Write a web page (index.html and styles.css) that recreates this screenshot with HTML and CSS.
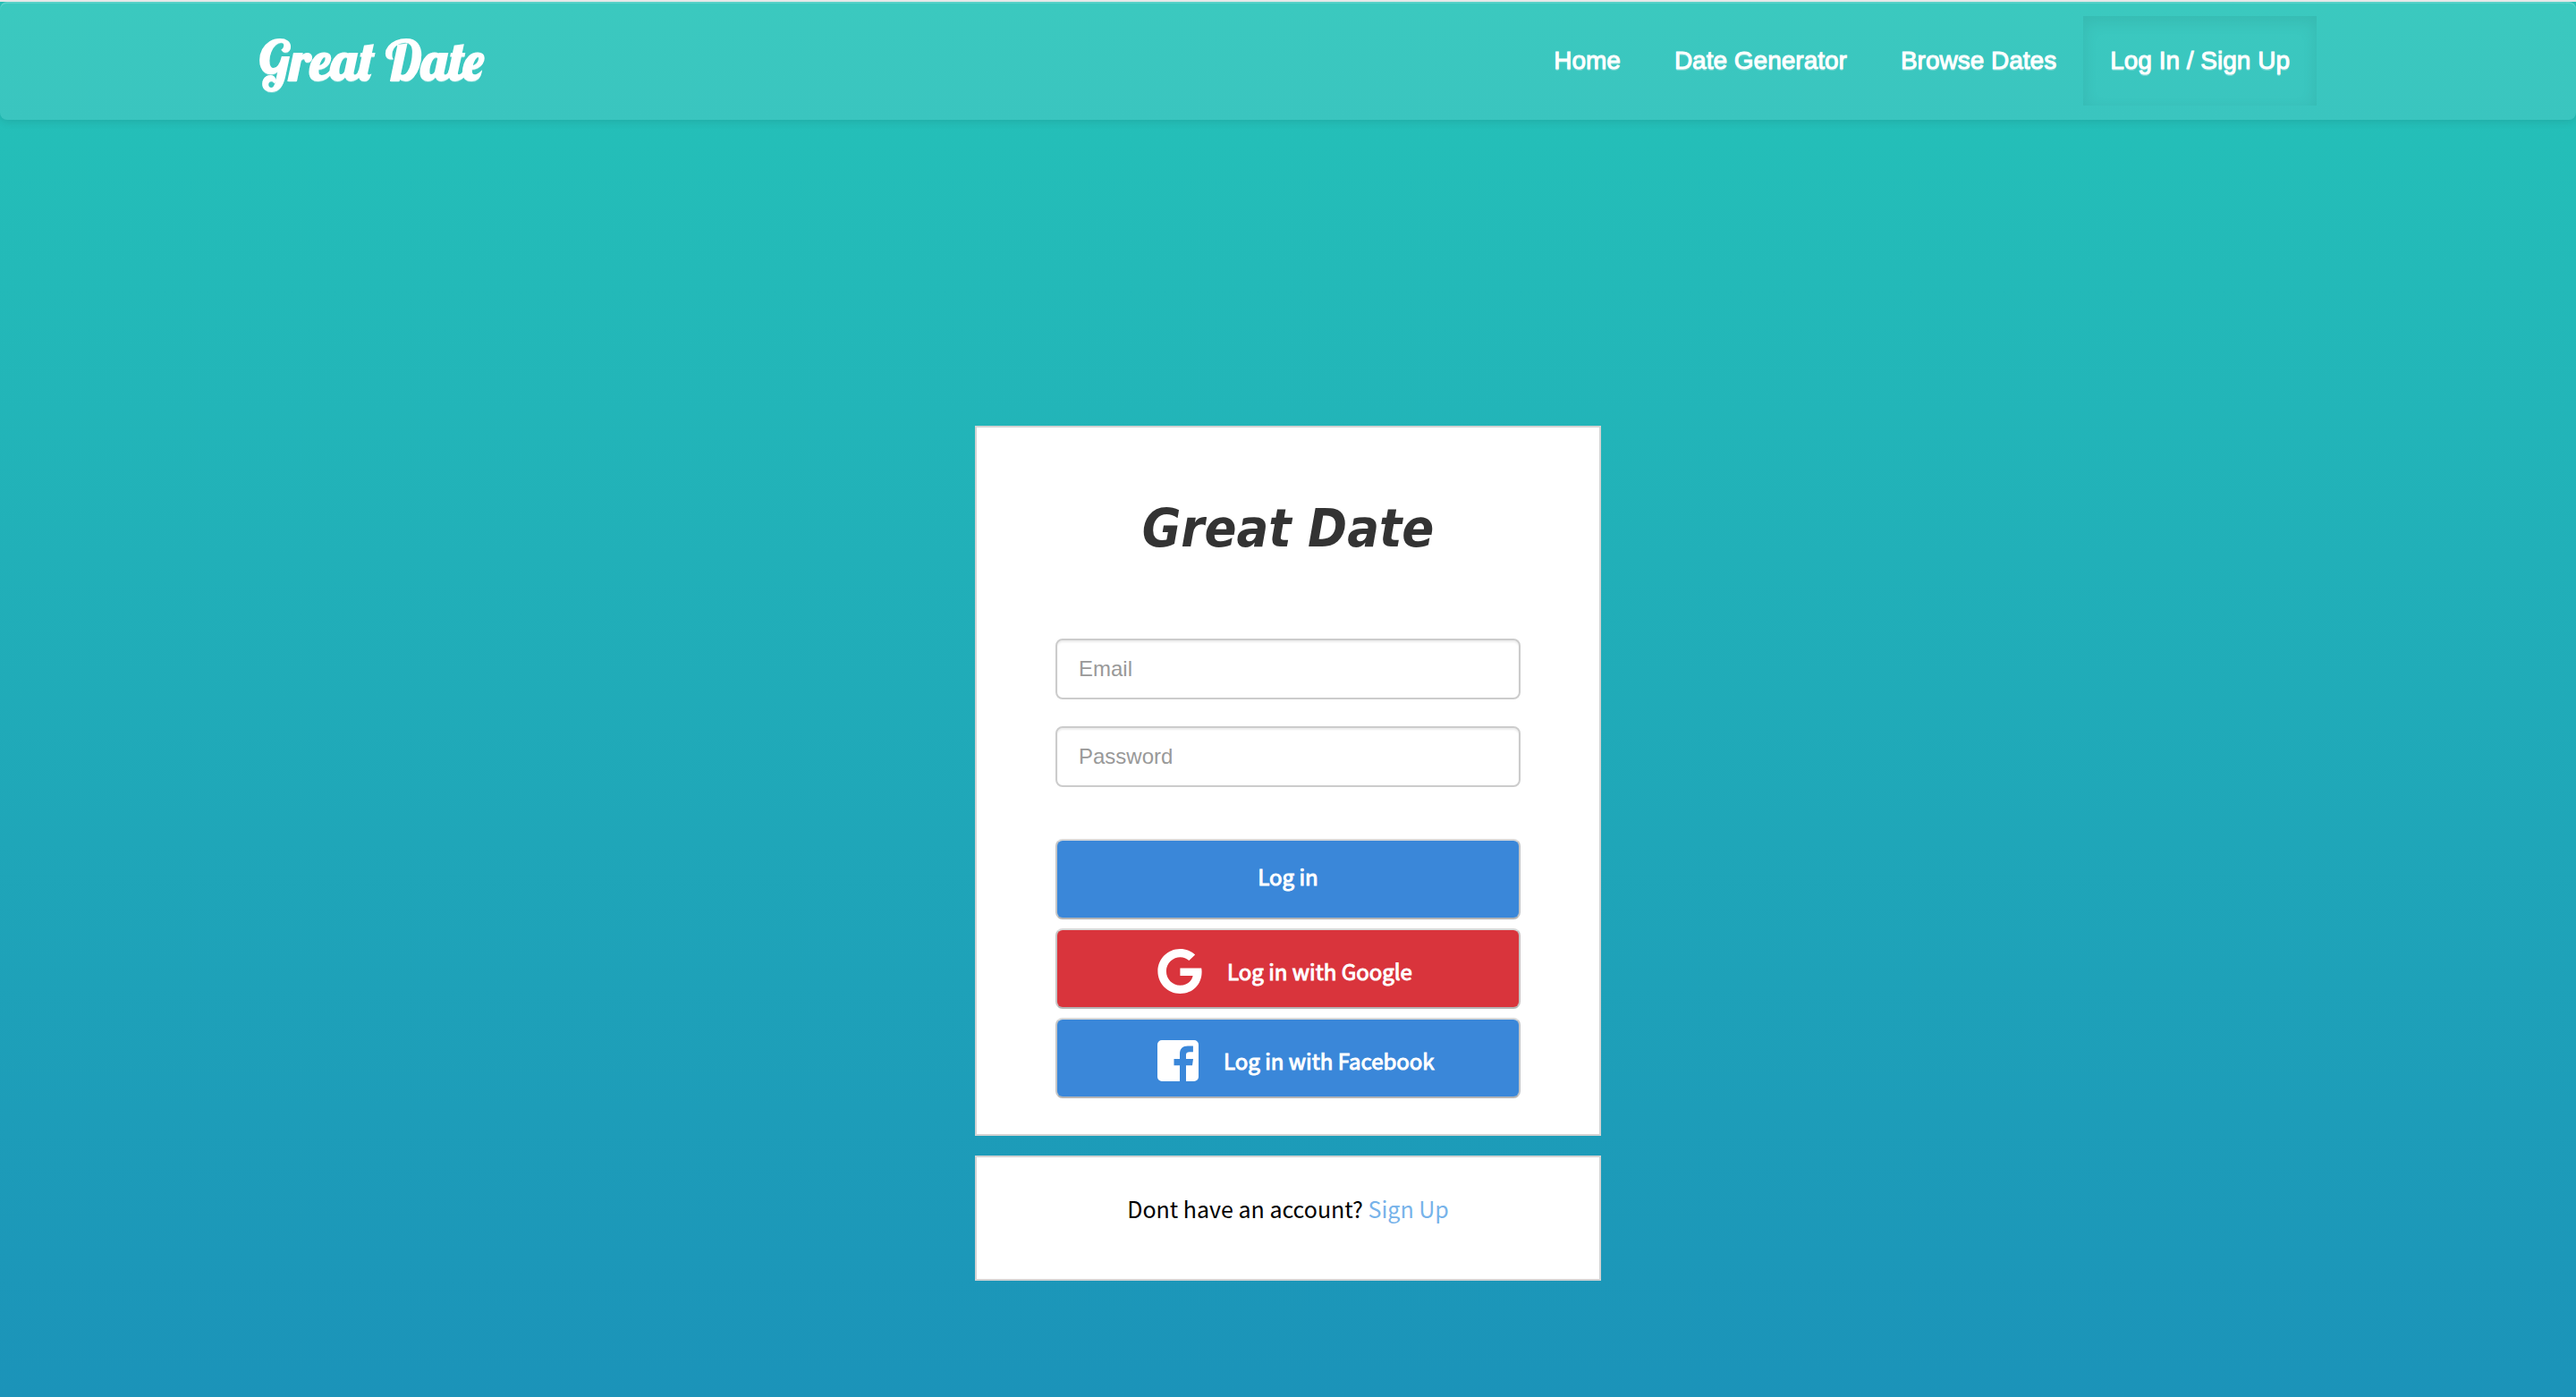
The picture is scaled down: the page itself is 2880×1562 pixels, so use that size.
FILE: index.html
```html
<!DOCTYPE html>
<html lang="en">
<head>
  <meta charset="utf-8">
  <meta name="viewport" content="width=device-width, initial-scale=1">
  <title>Great Date</title>
  <link rel="stylesheet" href="styles.css">
</head>
<body>
  <header class="navbar">
    <div class="navbar-inner">
      <a class="brand" href="#">Great Date</a>
      <nav class="nav-links">
        <a class="nav-link" href="#">Home</a>
        <a class="nav-link" href="#">Date Generator</a>
        <a class="nav-link" href="#">Browse Dates</a>
        <a class="nav-link nav-link-active" href="#">Log In / Sign Up</a>
      </nav>
    </div>
  </header>
  <main class="content">
    <form class="card login-card">
      <h1 class="title">Great Date</h1>
      <div class="fields">
        <input class="field" type="email" placeholder="Email" aria-label="Email">
        <input class="field" type="password" placeholder="Password" aria-label="Password">
      </div>
      <div class="buttons">
        <button class="btn btn-login" type="submit">Log in</button>
        <button class="btn btn-social btn-google" type="button">
          <svg class="icon-google" viewBox="0 8 488 496" aria-hidden="true"><path fill="currentColor" d="M488 261.800C488 403.300 391.100 504 248 504 110.800 504 0 393.200 0 256S110.800 8 248 8c66.800 0 123 24.500 166.300 64.900l-67.500 64.900C258.500 52.600 94.300 116.600 94.300 256c0 86.500 69.100 156.600 153.700 156.600 98.200 0 135-70.400 140.800-106.900H248v-85.300h236.100c2.300 12.700 3.900 24.900 3.900 41.400z"/></svg>
          <span>Log in with Google</span>
        </button>
        <button class="btn btn-social btn-facebook" type="button">
          <svg class="icon-facebook" viewBox="0 0 46 46" aria-hidden="true"><path fill="currentColor" d="M5 0H41a5 5 0 0 1 5 5V41a5 5 0 0 1-5 5H32V28.200h7l1-7.200h-8v-4.400c0-2.500 1.300-3.400 4-3.400h3.900V6.600H34c-5.700 0-9 3.200-9 8.900V21h-6.500v7.200H25V46H5a5 5 0 0 1-5-5V5a5 5 0 0 1 5-5z"/></svg>
          <span>Log in with Facebook</span>
        </button>
      </div>
    </form>
    <section class="card signup-card">
      <p class="signup-text">Dont have an account? <a class="signup-link" href="#">Sign Up</a></p>
    </section>
  </main>
</body>
</html>
```

FILE: styles.css
```css
* {
  box-sizing: border-box;
}

body {
  margin: 0;
  min-height: 100vh;
  border-top: 2px solid #e6e8e8;
  background: linear-gradient(#25c3b8, #1b93b9);
  font-family: "Liberation Sans", Arial, sans-serif;
}

.navbar {
  padding: 16px 20px;
  border-radius: 8px;
  background: rgba(255, 255, 255, 0.1);
  box-shadow: inset 0 2px 0 rgba(255, 255, 255, 0.15), 0 2px 10px rgba(0, 0, 0, 0.1);
}

.navbar-inner {
  display: flex;
  align-items: center;
  justify-content: space-between;
  max-width: 2300px;
  margin: 0 auto;
}

.brand {
  color: #fff;
  font: 60px/64px "Lobster", "Liberation Serif", serif;
  text-decoration: none;
  text-shadow: 0 2px 0 rgba(255, 255, 255, 0.25);
  -webkit-text-stroke: 2px #fff;
}

.nav-links {
  display: flex;
}

.nav-link {
  padding: 0 30px;
  color: #fff;
  font-size: 28px;
  line-height: 100px;
  text-decoration: none;
  text-shadow: 0 2px 0 rgba(255, 255, 255, 0.25);
  -webkit-text-stroke: 1px #fff;
}

.nav-link-active {
  box-shadow: inset 0 6px 18px rgba(0, 0, 0, 0.08);
}

.content {
  display: flex;
  flex-direction: column;
  align-items: center;
  gap: 22px;
  padding: 342px 20px 100px;
}

.card {
  width: 100%;
  max-width: 700px;
  border: 2px solid #d3d3d3;
  background: #fff;
}

.login-card {
  padding: 78px 88px 40px;
}

.title {
  margin: 0 0 88px;
  color: #333;
  font: italic bold 59px/70px "DejaVu Sans Condensed", "DejaVu Sans", sans-serif;
  text-align: center;
}

.fields {
  display: grid;
  gap: 30px;
  margin-bottom: 58px;
}

.field {
  width: 100%;
  height: 68px;
  padding: 0 24px;
  border: 2px solid #ccc;
  border-radius: 8px;
  background: #fff;
  box-shadow: inset 0 2px 2px rgba(0, 0, 0, 0.075);
  color: #555;
  font-family: inherit;
  font-size: 24px;
}

.field::placeholder {
  color: #999;
}

.buttons {
  display: grid;
  gap: 10px;
}

.btn {
  display: flex;
  align-items: center;
  height: 90px;
  border: 2px solid #c6c6c6;
  border-top-color: #d8d8d8;
  border-bottom-color: #b5b5b5;
  border-radius: 8px;
  background: #3a87d9;
  color: #fff;
  font: 24px/38px "Source Sans Pro", "Noto Sans CJK SC", sans-serif;
  -webkit-text-stroke: 1px #fff;
}

.btn-login {
  justify-content: center;
  padding: 0 0 6px;
}

.btn-social {
  gap: 28px;
  padding: 6px 0 0 112px;
}

.btn-google {
  background: #d9343c;
}

.icon-google {
  width: 50px;
  height: 50px;
}

.icon-facebook {
  width: 46px;
  height: 46px;
}

.signup-card {
  padding: 38px 20px 60px;
}

.signup-text {
  margin: 0;
  color: #000;
  font: 25px/38px "Source Sans Pro", "Noto Sans CJK SC", sans-serif;
  text-align: center;
}

.signup-link {
  color: #77b3ea;
  text-decoration: none;
}
```
